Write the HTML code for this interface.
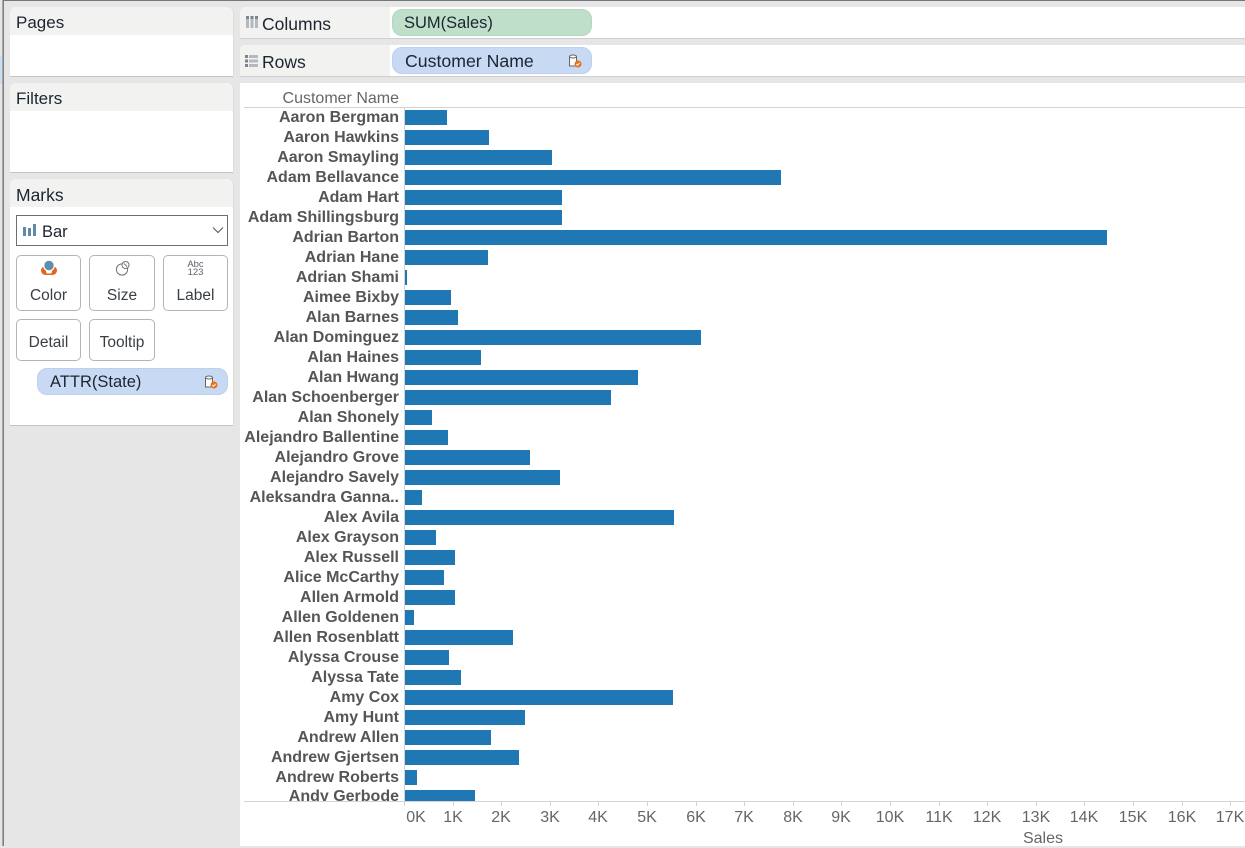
<!DOCTYPE html>
<html><head><meta charset="utf-8"><style>
html,body{margin:0;padding:0;width:1245px;height:846px;overflow:hidden;background:#e6e6e6;font-family:"Liberation Sans",sans-serif}
div,span,svg{position:absolute}
.p{left:10px;width:223px;background:#fff;border-radius:6px 6px 0 0;box-shadow:0 1px 0 #c4c4c4,1px 0 0 #dcdcdc;overflow:hidden}
.h{left:0;top:0;width:223px;height:28px;background:#f2f2f1}
.t{font-size:17px;color:#1c2530;white-space:nowrap;line-height:20px}
.b{background:#fff;border:1px solid #b4b4b4;border-radius:5px;box-sizing:border-box}
.bt{font-size:15.5px;color:#3a3f45;white-space:nowrap;text-align:center;line-height:18px}
.pill{border-radius:10px;box-sizing:border-box}
.l{right:846px;margin-top:1px;font-weight:bold;font-size:16px;line-height:20px;color:#555;white-space:nowrap;text-align:right}
.r{left:405px;height:15px;background:#1f77b4}
.x{top:809px;width:50px;text-align:center;font-size:16px;line-height:18px;color:#666}
.k{top:801px;width:1px;height:5px;background:#d4d4d4}
</style></head><body>
<div style="left:3px;top:0;width:1px;height:846px;background:#808080"></div>
<div style="left:2px;top:0;width:1px;height:846px;background:#a8a8a8"></div>
<div style="left:3px;top:0;width:1242px;height:1px;background:#777"></div>
<div style="left:0;top:56px;width:2px;height:28px;background:#c9dcf2"></div>

<div class="p" style="top:7px;height:69px"><div class="h"></div><div class="t" style="left:6px;top:6px;font-size:17px">Pages</div></div>
<div class="p" style="top:83px;height:89px"><div class="h"></div><div class="t" style="left:6px;top:6px;font-size:17px">Filters</div></div>
<div class="p" style="top:179px;height:246px"><div class="h"></div><div class="t" style="left:6px;top:6px;font-size:17.5px">Marks</div></div>

<div style="left:16px;top:215px;width:212px;height:31px;box-sizing:border-box;border:1px solid #6e6e6e;background:#fff"></div>
<svg style="left:23px;top:224px" width="14" height="13"><rect x="0" y="3" width="3" height="9" fill="#5f8aa8"/><rect x="5" y="4" width="3" height="8" fill="#5f8aa8"/><rect x="10" y="0" width="3" height="12" fill="#5f8aa8"/></svg>
<div class="t" style="left:42px;top:222px;font-size:16.5px;margin-top:-0.5px">Bar</div>
<svg style="left:212px;top:226px" width="12" height="8"><path d="M1 1.5L6 6.5L11 1.5" fill="none" stroke="#555" stroke-width="1"/></svg>

<div class="b" style="left:16px;top:255px;width:65px;height:56px"></div>
<div class="b" style="left:89px;top:255px;width:66px;height:56px"></div>
<div class="b" style="left:163px;top:255px;width:65px;height:56px"></div>
<div class="b" style="left:16px;top:319px;width:65px;height:42px"></div>
<div class="b" style="left:89px;top:319px;width:66px;height:42px"></div>
<svg style="left:40px;top:260px" width="18" height="17"><circle cx="5.5" cy="10.5" r="4.5" fill="#e2661e"/><circle cx="12.5" cy="10.5" r="4.5" fill="#e2661e"/><circle cx="9" cy="5.5" r="6" fill="#fff"/><path d="M6 11h6l-1 4H7z" fill="#fff"/><circle cx="9" cy="5.5" r="4.7" fill="#5f8db0"/><path d="M5.5 13.5h7l-1 1.5h-5z" fill="#e2661e"/></svg>
<svg style="left:115px;top:260px" width="16" height="16"><circle cx="7" cy="9.5" r="5.6" fill="none" stroke="#6d7378" stroke-width="1"/><circle cx="10.5" cy="5" r="3.5" fill="#fff" stroke="#6d7378" stroke-width="1"/><path d="M9 3.5L12 6.5" stroke="#6d7378"/></svg>
<div style="left:185px;top:261px;width:21px;text-align:center;font-size:9.5px;line-height:8px;color:#5c646c;white-space:nowrap">Abc<br>123</div>
<div class="bt" style="left:16px;top:287px;width:65px">Color</div>
<div class="bt" style="left:89px;top:287px;width:66px">Size</div>
<div class="bt" style="left:163px;top:287px;width:65px">Label</div>
<div class="bt" style="left:16px;top:334px;width:65px">Detail</div>
<div class="bt" style="left:89px;top:334px;width:66px">Tooltip</div>

<div class="pill" style="left:37px;top:368px;width:191px;height:27px;background:#c8d9f3;border:1px solid #bdd0ee"></div>
<div class="t" style="left:50px;top:372px;font-size:16.5px">ATTR(State)</div>
<svg style="left:204px;top:375px" width="15" height="15"><path d="M1.5 2.5h7v9.5h-7z" fill="#fff" stroke="#666" stroke-width="1"/><ellipse cx="5" cy="2.5" rx="3.5" ry="1.5" fill="#fff" stroke="#666"/><circle cx="10" cy="10" r="3.5" fill="#e8701c"/><path d="M8.3 10l1.3 1.3 2-2.4" fill="none" stroke="#fff" stroke-width="1"/></svg>

<div style="left:240px;top:7px;width:1005px;height:31px;background:#fff;box-shadow:0 1px 0 #cfcfcf;border-radius:5px 0 0 0"></div>
<div style="left:240px;top:7px;width:150px;height:31px;background:#f2f2f1;border-radius:5px 0 0 0"></div>
<div style="left:240px;top:45px;width:1005px;height:31px;background:#fff;box-shadow:0 1px 0 #cfcfcf;border-radius:5px 0 0 0"></div>
<div style="left:240px;top:45px;width:150px;height:31px;background:#f2f2f1;border-radius:5px 0 0 0"></div>
<svg style="left:246px;top:16px" width="12" height="13"><rect width="3" height="12" x="0" fill="#b4b9bf"/><rect width="3" height="12" x="4.5" fill="#b4b9bf"/><rect width="3" height="12" x="9" fill="#b4b9bf"/><rect width="3" height="3" x="0" fill="#7b838c"/><rect width="3" height="3" x="4.5" fill="#7b838c"/><rect width="3" height="3" x="9" fill="#7b838c"/></svg>
<svg style="left:245px;top:55px" width="13" height="12"><rect width="3" height="12" fill="#7b838c"/><rect x="4" width="9" height="12" fill="#b4b9bf"/><rect y="3" width="13" height="1.5" fill="#f2f2f1"/><rect y="7.5" width="13" height="1.5" fill="#f2f2f1"/></svg>
<div class="t" style="left:262px;top:14px;font-size:17.5px">Columns</div>
<div class="t" style="left:262px;top:52px;font-size:17.5px">Rows</div>
<div class="pill" style="left:392px;top:9px;width:200px;height:27px;background:#bfdfca;border:1px solid #b2d6bf"></div>
<div class="t" style="left:404px;top:13px;font-size:16.5px">SUM(Sales)</div>
<div class="pill" style="left:392px;top:47px;width:200px;height:27px;background:#c8d9f3;border:1px solid #bdd0ee"></div>
<div class="t" style="left:405px;top:51px;font-size:17.7px">Customer Name</div>
<svg style="left:568px;top:54px" width="15" height="15"><path d="M1.5 2.5h7v9.5h-7z" fill="#fff" stroke="#666" stroke-width="1"/><ellipse cx="5" cy="2.5" rx="3.5" ry="1.5" fill="#fff" stroke="#666"/><circle cx="10" cy="10" r="3.5" fill="#e8701c"/><path d="M8.3 10l1.3 1.3 2-2.4" fill="none" stroke="#fff" stroke-width="1"/></svg>

<div style="left:240px;top:83px;width:1005px;height:763px;background:#fff"></div>
<div style="left:244px;top:107px;width:1001px;height:1px;background:#d4d4d4"></div>
<div style="left:404px;top:108px;width:1px;height:693px;background:#d4d4d4"></div>
<div class="l" style="top:88px;font-weight:normal;color:#666">Customer Name</div>

<div class="l" style="top:107px">Aaron Bergman</div><div class="r" style="top:110px;width:42px"></div>
<div class="l" style="top:127px">Aaron Hawkins</div><div class="r" style="top:130px;width:84px"></div>
<div class="l" style="top:147px">Aaron Smayling</div><div class="r" style="top:150px;width:147px"></div>
<div class="l" style="top:167px">Adam Bellavance</div><div class="r" style="top:170px;width:376px"></div>
<div class="l" style="top:187px">Adam Hart</div><div class="r" style="top:190px;width:157px"></div>
<div class="l" style="top:207px">Adam Shillingsburg</div><div class="r" style="top:210px;width:157px"></div>
<div class="l" style="top:227px">Adrian Barton</div><div class="r" style="top:230px;width:702px"></div>
<div class="l" style="top:247px">Adrian Hane</div><div class="r" style="top:250px;width:83px"></div>
<div class="l" style="top:267px">Adrian Shami</div><div class="r" style="top:270px;width:2px"></div>
<div class="l" style="top:287px">Aimee Bixby</div><div class="r" style="top:290px;width:46px"></div>
<div class="l" style="top:307px">Alan Barnes</div><div class="r" style="top:310px;width:53px"></div>
<div class="l" style="top:327px">Alan Dominguez</div><div class="r" style="top:330px;width:296px"></div>
<div class="l" style="top:347px">Alan Haines</div><div class="r" style="top:350px;width:76px"></div>
<div class="l" style="top:367px">Alan Hwang</div><div class="r" style="top:370px;width:233px"></div>
<div class="l" style="top:387px">Alan Schoenberger</div><div class="r" style="top:390px;width:206px"></div>
<div class="l" style="top:407px">Alan Shonely</div><div class="r" style="top:410px;width:27px"></div>
<div class="l" style="top:427px">Alejandro Ballentine</div><div class="r" style="top:430px;width:43px"></div>
<div class="l" style="top:447px">Alejandro Grove</div><div class="r" style="top:450px;width:125px"></div>
<div class="l" style="top:467px">Alejandro Savely</div><div class="r" style="top:470px;width:155px"></div>
<div class="l" style="top:487px">Aleksandra Ganna..</div><div class="r" style="top:490px;width:17px"></div>
<div class="l" style="top:507px">Alex Avila</div><div class="r" style="top:510px;width:269px"></div>
<div class="l" style="top:527px">Alex Grayson</div><div class="r" style="top:530px;width:31px"></div>
<div class="l" style="top:547px">Alex Russell</div><div class="r" style="top:550px;width:50px"></div>
<div class="l" style="top:567px">Alice McCarthy</div><div class="r" style="top:570px;width:39px"></div>
<div class="l" style="top:587px">Allen Armold</div><div class="r" style="top:590px;width:50px"></div>
<div class="l" style="top:607px">Allen Goldenen</div><div class="r" style="top:610px;width:9px"></div>
<div class="l" style="top:627px">Allen Rosenblatt</div><div class="r" style="top:630px;width:108px"></div>
<div class="l" style="top:647px">Alyssa Crouse</div><div class="r" style="top:650px;width:44px"></div>
<div class="l" style="top:667px">Alyssa Tate</div><div class="r" style="top:670px;width:56px"></div>
<div class="l" style="top:687px">Amy Cox</div><div class="r" style="top:690px;width:268px"></div>
<div class="l" style="top:707px">Amy Hunt</div><div class="r" style="top:710px;width:120px"></div>
<div class="l" style="top:727px">Andrew Allen</div><div class="r" style="top:730px;width:86px"></div>
<div class="l" style="top:747px">Andrew Gjertsen</div><div class="r" style="top:750px;width:114px"></div>
<div class="l" style="top:767px">Andrew Roberts</div><div class="r" style="top:770px;width:12px"></div>
<div style="left:240px;top:783px;width:160px;height:18px;overflow:hidden"><div class="l" style="top:3px;right:1px">Andy Gerbode</div></div><div class="r" style="top:790px;width:70px;height:11px"></div>

<div style="left:244px;top:801px;width:1001px;height:1px;background:#d4d4d4"></div>
<div class="k" style="left:404px"></div><div class="k" style="left:453px"></div><div class="k" style="left:501px"></div><div class="k" style="left:550px"></div><div class="k" style="left:598px"></div><div class="k" style="left:647px"></div><div class="k" style="left:696px"></div><div class="k" style="left:744px"></div><div class="k" style="left:793px"></div><div class="k" style="left:841px"></div><div class="k" style="left:890px"></div><div class="k" style="left:939px"></div><div class="k" style="left:987px"></div><div class="k" style="left:1036px"></div><div class="k" style="left:1084px"></div><div class="k" style="left:1133px"></div><div class="k" style="left:1182px"></div><div class="k" style="left:1230px"></div>
<div class="x" style="left:391px">0K</div><div class="x" style="left:428px">1K</div><div class="x" style="left:476px">2K</div><div class="x" style="left:525px">3K</div><div class="x" style="left:573px">4K</div><div class="x" style="left:622px">5K</div><div class="x" style="left:671px">6K</div><div class="x" style="left:719px">7K</div><div class="x" style="left:768px">8K</div><div class="x" style="left:816px">9K</div><div class="x" style="left:865px">10K</div><div class="x" style="left:914px">11K</div><div class="x" style="left:962px">12K</div><div class="x" style="left:1011px">13K</div><div class="x" style="left:1059px">14K</div><div class="x" style="left:1108px">15K</div><div class="x" style="left:1157px">16K</div><div class="x" style="left:1205px">17K</div>
<div class="x" style="left:1018px;top:830px">Sales</div>
</body></html>
